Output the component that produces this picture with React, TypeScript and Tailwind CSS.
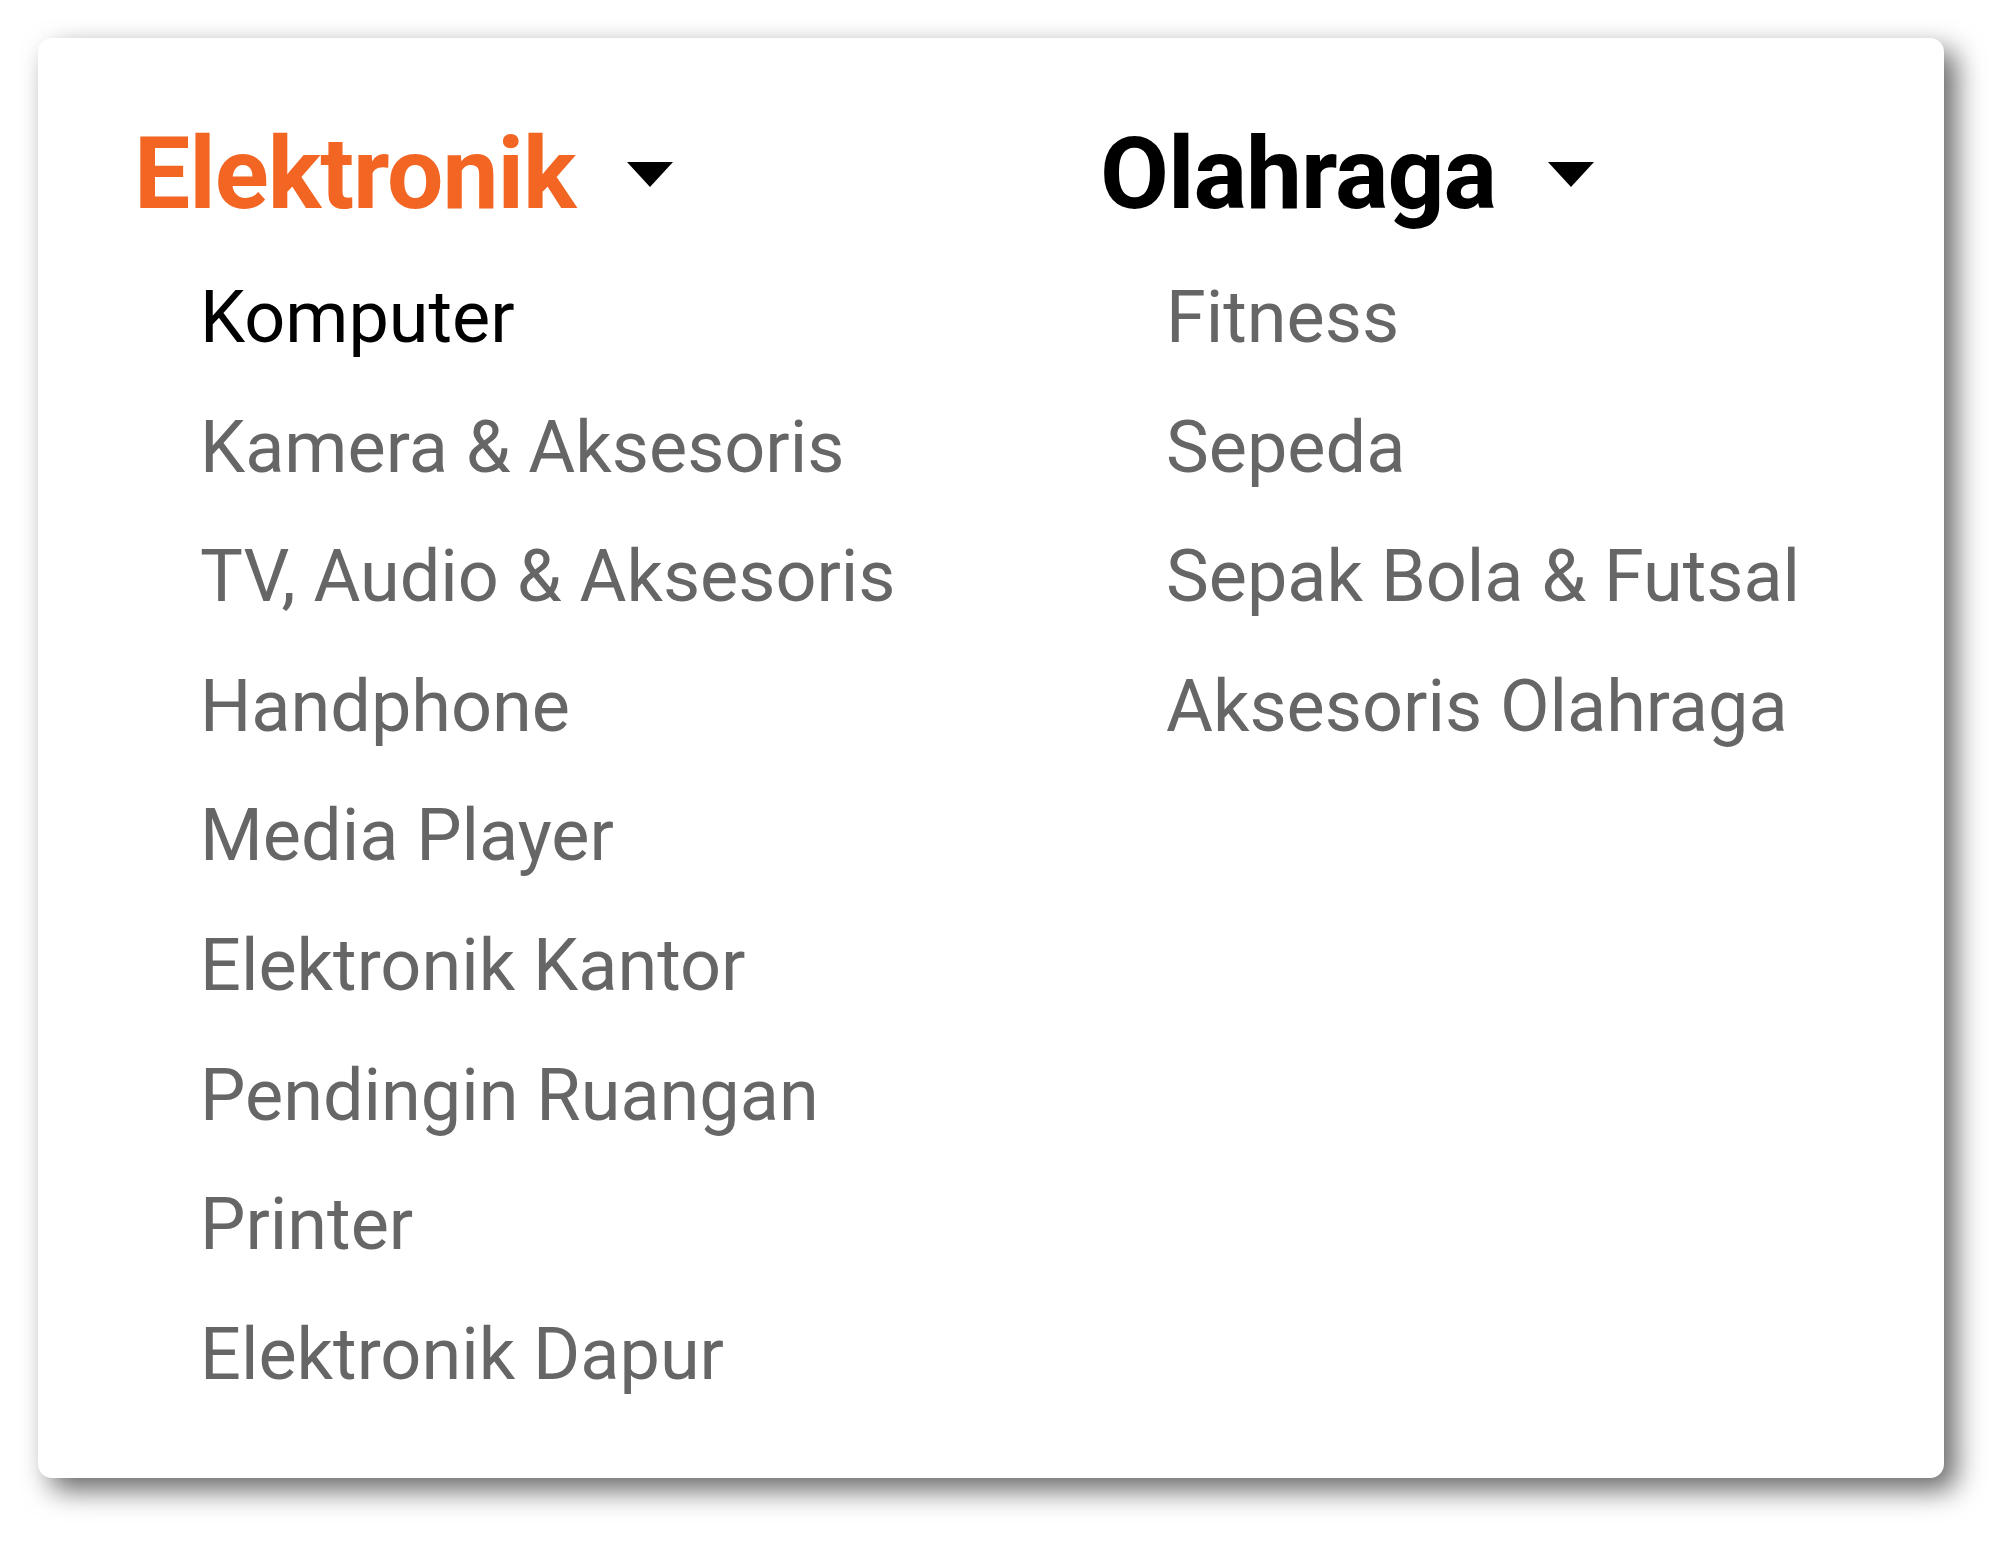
import React from "react";

const categories = [
  {
    title: "Elektronik",
    active: true,
    items: [
      "Komputer",
      "Kamera & Aksesoris",
      "TV, Audio & Aksesoris",
      "Handphone",
      "Media Player",
      "Elektronik Kantor",
      "Pendingin Ruangan",
      "Printer",
      "Elektronik Dapur",
    ],
  },
  {
    title: "Olahraga",
    active: false,
    items: ["Fitness", "Sepeda", "Sepak Bola & Futsal", "Aksesoris Olahraga"],
  },
];

function Caret() {
  return (
    <svg width="46" height="25" viewBox="0 0 46 25" className="shrink-0">
      <path d="M0 0 H46 L23 25 Z" fill="#000" />
    </svg>
  );
}

export default function App() {
  return (
    <div
      className="min-h-screen w-full bg-white pt-[38px] pl-[38px]"
      style={{ fontFamily: "Roboto, 'Noto Sans', sans-serif" }}
    >
      {/* kartu menu kategori */}
      <div className="w-[1906px] h-[1440px] rounded-[14px] bg-white pt-[86px] pl-[96px] flex shadow-[12px_12px_28px_rgba(0,0,0,0.6)]">
        {categories.map((cat) => (
          <div key={cat.title} className="w-[966px] shrink-0 flex flex-col">
            <div className="flex items-center gap-[52px] h-[100px]">
              <span
                className={`text-[100px] leading-[100px] font-bold tracking-[-0.01em] ${
                  cat.active ? "text-[#f26522]" : "text-black"
                }`}
              >
                {cat.title}
              </span>
              <Caret />
            </div>
            <ul className="mt-[29px] pl-[66px]">
              {cat.items.map((item, i) => (
                <li
                  key={item}
                  className={`text-[72px] leading-[129.6px] whitespace-nowrap ${
                    cat.active && i === 0 ? "text-black" : "text-[#666666]"
                  }`}
                >
                  {item}
                </li>
              ))}
            </ul>
          </div>
        ))}
      </div>
    </div>
  );
}
